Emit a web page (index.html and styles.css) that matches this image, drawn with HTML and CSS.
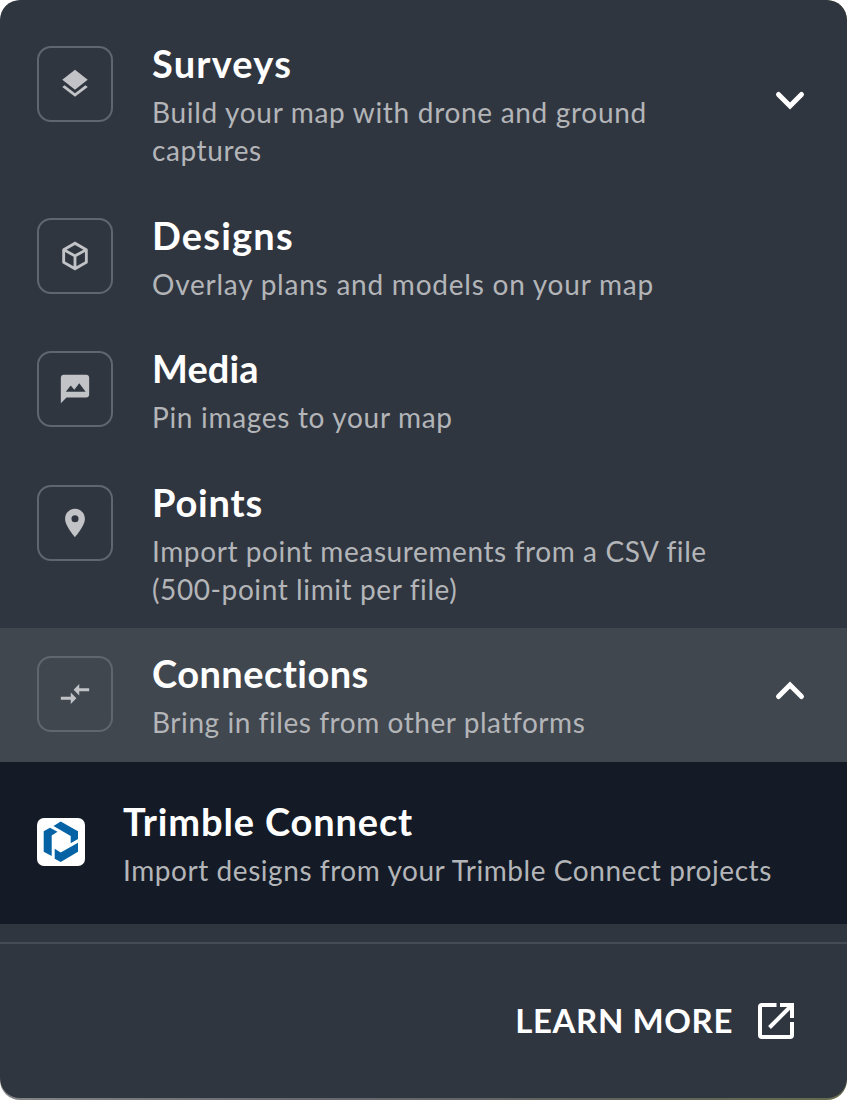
FILE: index.html
```html
<!DOCTYPE html>
<html lang="en">

<head>
    <meta charset="UTF-8">
    <meta name="viewport" content="width=device-width, initial-scale=1.0">
    <link rel="stylesheet" href="styles.css">
    <title>Import</title>
</head>

<body>
    <div class="backdrop">
        <div class="panel">
            <ul class="menu">
                <li class="item">
                    <div class="item-icon">
                        <svg viewBox="0 0 24 24"><path d="M12 18.54l-7.37-5.73L3 14.07l9 7 9-7-1.63-1.27zM12 16l7.36-5.73L21 9l-9-7-9 7 1.63 1.27z"/></svg>
                    </div>
                    <div class="item-text">
                        <h2 class="title surveys">Surveys</h2>
                        <p class="desc"><span class="build">Build your map with drone and ground</span><br><span class="captures">captures</span></p>
                    </div>
                    <svg class="chevron down" viewBox="0 0 32 24"><path d="M4.5 5.5L16 17 27.5 5.5"/></svg>
                </li>
                <li class="item">
                    <div class="item-icon">
                        <svg viewBox="0 0 24 24"><path d="M21 16.5c0 .38-.21.71-.53.88l-7.9 4.44c-.16.12-.36.18-.57.18s-.41-.06-.57-.18l-7.9-4.44A.99.99 0 0 1 3 16.5v-9c0-.38.21-.71.53-.88l7.9-4.44c.16-.12.36-.18.57-.18s.41.06.57.18l7.9 4.44c.32.17.53.5.53.88v9M12 4.15L6.04 7.5 12 10.85l5.96-3.35L12 4.15M5 15.91l6 3.38v-6.71L5 9.21v6.7m14 0v-6.7l-6 3.37v6.71l6-3.38z"/></svg>
                    </div>
                    <div class="item-text">
                        <h2 class="title designs">Designs</h2>
                        <p class="desc"><span class="overlay">Overlay plans and models on your map</span></p>
                    </div>
                </li>
                <li class="item">
                    <div class="item-icon">
                        <svg viewBox="0 0 24 24"><path d="M20 2H4c-1.1 0-1.99.9-1.99 2L2 22l4-4h14c1.1 0 2-.9 2-2V4c0-1.1-.9-2-2-2zM5.5 14L9 9.5l2.5 3.01L15 8l4.5 6z"/></svg>
                    </div>
                    <div class="item-text">
                        <h2 class="title media">Media</h2>
                        <p class="desc"><span class="pin">Pin images to your map</span></p>
                    </div>
                </li>
                <li class="item">
                    <div class="item-icon">
                        <svg viewBox="0 0 24 24"><path d="M12 2C8.13 2 5 5.13 5 9c0 5.25 7 13 7 13s7-7.75 7-13c0-3.87-3.13-7-7-7zm0 9.5a2.5 2.5 0 0 1 0-5 2.5 2.5 0 0 1 0 5z"/></svg>
                    </div>
                    <div class="item-text">
                        <h2 class="title points">Points</h2>
                        <p class="desc"><span class="measure">Import point measurements from a CSV file</span><br><span class="limit">(500-point limit per file)</span></p>
                    </div>
                </li>
                <li class="item active">
                    <div class="item-icon">
                        <svg viewBox="0 0 24 24"><path d="M9.01 14H2v2h7.01v3L13 15l-3.99-4v3zm5.98-1v-3H22V8h-7.01V5L11 9l3.99 4z"/></svg>
                    </div>
                    <div class="item-text">
                        <h2 class="title connections">Connections</h2>
                        <p class="desc"><span class="bring">Bring in files from other platforms</span></p>
                    </div>
                    <svg class="chevron up" viewBox="0 0 32 24"><path d="M4.5 17.5L16 6l11.5 11.5"/></svg>
                </li>
            </ul>
            <div class="sub-item">
                <svg class="logo" viewBox="0 0 48 48">
                    <rect width="48" height="48" rx="7" fill="#fff"/>
                    <g fill="#0563a5">
                        <path d="M16.5 8L23.700 3.500 41 13.200V21l-7.300 4.200V18z"/>
                        <path d="M6.700 13.300L13 9.700l7.500 4-5.800 3.800V38l-8-4.300z"/>
                        <path d="M17.700 30.700l6 3.900L41 24.700v9L23.700 44l-6-3.300z"/>
                    </g>
                </svg>
                <div class="item-text">
                    <h2 class="title trimble">Trimble Connect</h2>
                    <p class="desc"><span class="projects">Import designs from your Trimble Connect projects</span></p>
                </div>
            </div>
            <div class="footer">
                <a href="#" class="learn">
                    <span class="learn-text">LEARN MORE</span>
                    <svg class="open-icon" viewBox="0 0 38 38">
                        <path d="M19.5 3H5a2 2 0 0 0-2 2v28a2 2 0 0 0 2 2h28a2 2 0 0 0 2-2V20M34 4L12.5 25.5"/>
                        <path d="M23 3h12v13"/>
                    </svg>
                </a>
            </div>
        </div>
    </div>
</body>

</html>
```
FILE: styles.css
```css
body {
    margin: 0;
    background: #fff;
    font-family: Lato, "Open Sans", sans-serif;
}

h2,
p,
ul {
    margin: 0;
    padding: 0;
}

.backdrop {
    height: 1100px;
    border-radius: 20px;
    overflow: hidden;
    background: linear-gradient(90deg, #858585, #696a72 35%, #62625f 70%, #666c4e);
}

.panel {
    display: flex;
    flex-direction: column;
    box-sizing: border-box;
    height: 1098px;
    padding-top: 18px;
    border-radius: 20px;
    background: #303640;
}

.menu {
    list-style: none;
}

.item {
    display: flex;
    align-items: flex-start;
    padding: 21px 41px 20.5px 37px;
}

.active {
    background: #41474f;
}

.item-icon {
    display: flex;
    align-items: center;
    justify-content: center;
    box-sizing: border-box;
    width: 76px;
    height: 76px;
    margin: 7px 39px 0 0;
    border: 2px solid #60656e;
    border-radius: 14px;
}

.item-icon svg {
    width: 34px;
    height: 34px;
    fill: #c1c3c6;
}

.item-text {
    flex: 1;
    white-space: nowrap;
}

.title {
    margin-bottom: 6px;
    color: #fff;
    font-size: 38px;
    font-weight: 700;
    line-height: 48px;
    font-variant-ligatures: none;
}

.desc {
    color: #b3b5b8;
    font-size: 28px;
    line-height: 38px;
}

/* tracking */
.surveys,
.designs {
    letter-spacing: 1.2px;
}

.media {
    letter-spacing: .1px;
}

.points {
    letter-spacing: .8px;
}

.connections {
    letter-spacing: .45px;
}

.trimble {
    letter-spacing: .85px;
}

.build,
.pin {
    letter-spacing: .69px;
}

.captures {
    letter-spacing: .6px;
}

.overlay {
    letter-spacing: .77px;
}

.measure,
.limit {
    letter-spacing: .6px;
}

.bring,
.projects {
    letter-spacing: .56px;
}

.chevron {
    width: 32px;
    height: 24px;
    fill: none;
    stroke: #fff;
    stroke-width: 5;
    stroke-linecap: round;
}

.down {
    margin-top: 50px;
}

.up {
    margin-top: 30px;
}

.sub-item {
    display: flex;
    align-items: flex-start;
    box-sizing: border-box;
    height: 162px;
    padding: 35px 37px 0;
    background: #141b26;
}

.logo {
    width: 48px;
    height: 48px;
    margin: 21.5px 38px 0 0;
}

.footer {
    display: flex;
    flex: 1;
    align-items: center;
    justify-content: flex-end;
    margin-top: 18px;
    padding-right: 52px;
    border-top: 2px solid #464c56;
}

.learn {
    display: flex;
    align-items: center;
    gap: 24px;
    color: #fff;
    font-size: 33px;
    font-weight: 700;
    text-decoration: none;
}

.learn-text {
    padding-bottom: 2px;
    letter-spacing: .6px;
}

.open-icon {
    width: 38px;
    height: 38px;
    fill: none;
    stroke: #fff;
    stroke-width: 4;
}
```
